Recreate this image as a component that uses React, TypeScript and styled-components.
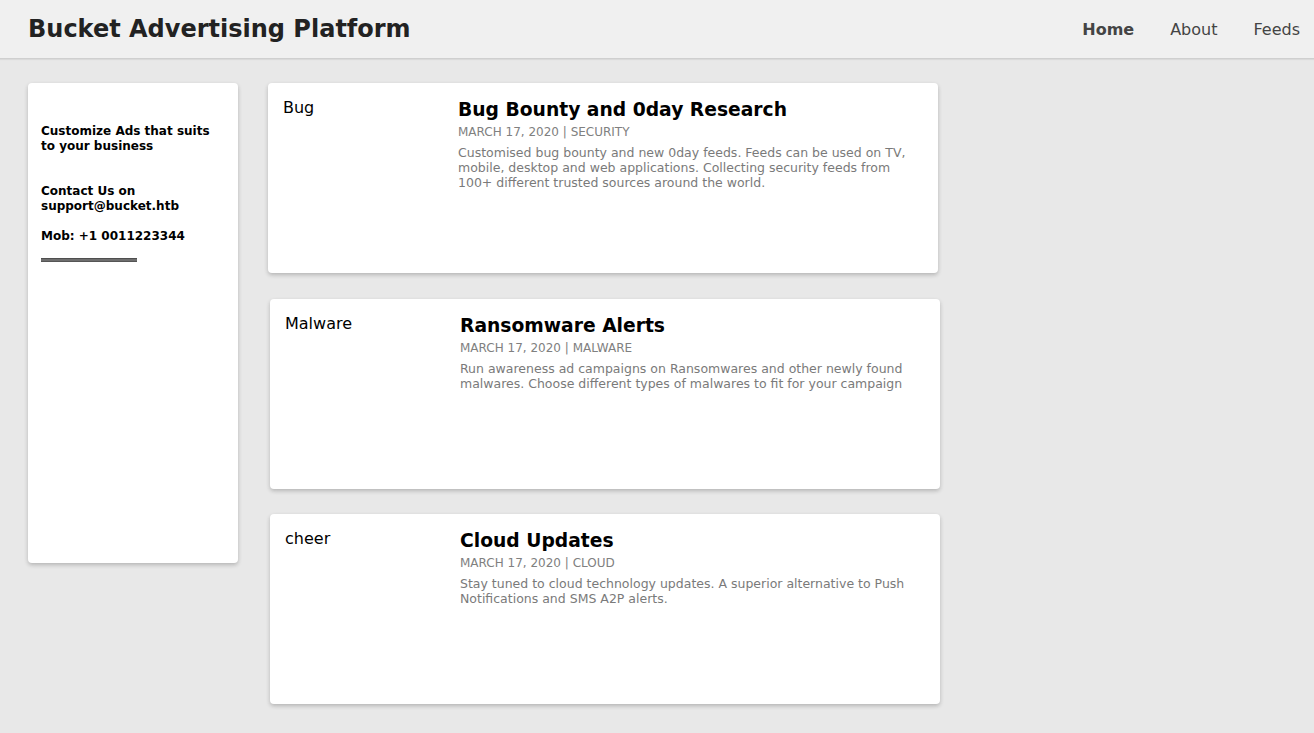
import React from "react";
import styled, { createGlobalStyle } from "styled-components";

const Global = createGlobalStyle`
  html, body { margin: 0; padding: 0; }
  body {
    background: #e8e8e8;
    font-family: "DejaVu Sans", "Liberation Sans", sans-serif;
    min-height: 733px;
  }
`;

const Header = styled.header`
  height: 58px;
  background: #f0f0f0;
  border-bottom: 1px solid #cfcfcf;
  box-shadow: 0 1px 1px rgba(0,0,0,0.06);
  display: flex;
  align-items: center;
  justify-content: space-between;
  padding: 0 14px 0 28px;
`;

const Brand = styled.h1`
  margin: 0;
  font-size: 24px;
  font-weight: bold;
  color: #222;
`;

const Nav = styled.nav`
  display: flex;
  gap: 36px;
`;

const NavLink = styled.a<{ $active?: boolean }>`
  font-size: 16px;
  color: #444;
  font-weight: ${(p) => (p.$active ? "bold" : "normal")};
  text-decoration: none;
`;

const Main = styled.main`
  display: flex;
  align-items: flex-start;
  gap: 30px;
  padding: 24px 0 0 28px;
`;

const Sidebar = styled.aside`
  width: 210px;
  height: 480px;
  box-sizing: border-box;
  background: #fff;
  border-radius: 4px;
  box-shadow: 0 2px 4px rgba(0,0,0,0.22);
  padding: 41px 13px 0;
`;

const SideText = styled.p<{ $gap: number }>`
  margin: ${(p) => p.$gap}px 0 0;
  font-size: 12px;
  line-height: 15px;
  font-weight: bold;
  color: #000;
`;

const Rule = styled.div`
  margin-top: 14px;
  width: 96px;
  height: 2px;
  background: #6e6e6e;
  border-top: 1px solid #4f4f4f;
  border-bottom: 1px solid #555;
`;

const Feed = styled.div`
  display: flex;
  flex-direction: column;
  gap: 25.5px;
`;

const Card = styled.article<{ $shift: number }>`
  width: 670px;
  height: 190px;
  box-sizing: border-box;
  margin-left: ${(p) => p.$shift}px;
  background: #fff;
  border-radius: 4px;
  box-shadow: 0 2px 4px rgba(0,0,0,0.22);
  display: flex;
  padding: 15px 20px 0 15px;
`;

const Thumb = styled.div`
  width: 175px;
  flex-shrink: 0;
  font-size: 16px;
  line-height: 19px;
  color: #000;
`;

const Body = styled.div`
  flex: 1;
`;

const Title = styled.h2`
  margin: 0;
  font-size: 18.72px;
  line-height: 23px;
  font-weight: bold;
  color: #000;
`;

const Meta = styled.div`
  margin-top: 4px;
  font-size: 12px;
  line-height: 15px;
  color: #808080;
  text-transform: uppercase;
`;

const Desc = styled.p`
  margin: 5px 0 0;
  font-size: 12.5px;
  line-height: 15px;
  color: #7a7a7a;
`;

const posts = [
  {
    alt: "Bug",
    title: "Bug Bounty and 0day Research",
    meta: "March 17, 2020 | Security",
    desc: "Customised bug bounty and new 0day feeds. Feeds can be used on TV, mobile, desktop and web applications. Collecting security feeds from 100+ different trusted sources around the world.",
    shift: 0,
  },
  {
    alt: "Malware",
    title: "Ransomware Alerts",
    meta: "March 17, 2020 | Malware",
    desc: "Run awareness ad campaigns on Ransomwares and other newly found malwares. Choose different types of malwares to fit for your campaign",
    shift: 2,
  },
  {
    alt: "cheer",
    title: "Cloud Updates",
    meta: "March 17, 2020 | Cloud",
    desc: "Stay tuned to cloud technology updates. A superior alternative to Push Notifications and SMS A2P alerts.",
    shift: 2,
  },
];

export default function App() {
  return (
    <>
      <Global />
      <Header>
        <Brand>Bucket Advertising Platform</Brand>
        <Nav>
          <NavLink $active href="#">Home</NavLink>
          <NavLink href="#">About</NavLink>
          <NavLink href="#">Feeds</NavLink>
        </Nav>
      </Header>
      <Main>
        <Sidebar>
          <SideText $gap={0}>Customize Ads that suits to your business</SideText>
          <SideText $gap={30}>Contact Us on support@bucket.htb</SideText>
          <SideText $gap={15}>Mob: +1 0011223344</SideText>
          <Rule />
        </Sidebar>
        <Feed>
          {posts.map((p) => (
            <Card key={p.title} $shift={p.shift}>
              <Thumb>{p.alt}</Thumb>
              <Body>
                <Title>{p.title}</Title>
                <Meta>{p.meta}</Meta>
                <Desc>{p.desc}</Desc>
              </Body>
            </Card>
          ))}
        </Feed>
      </Main>
    </>
  );
}
